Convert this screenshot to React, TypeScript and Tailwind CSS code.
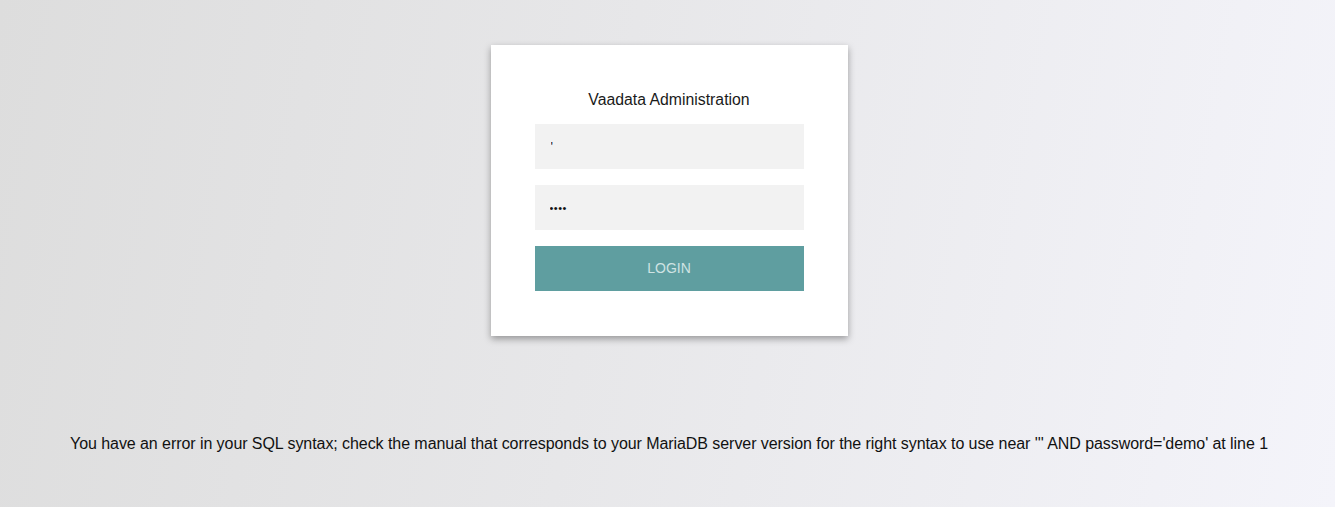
export default function App() {
  return (
    <main
      className="min-h-[507px] w-full flex flex-col items-center pt-[45px] pl-[3px] bg-[linear-gradient(100deg,#dddddd_0%,#e7e7e9_45%,#f4f4fa_100%)]"
      style={{ fontFamily: '"Liberation Sans", Arial, sans-serif' }}
    >
      {/* login card */}
      <div className="w-[357px] bg-white px-[44px] pt-[46px] pb-[45px] shadow-[0_3px_7px_rgba(0,0,0,0.35)]">
        <h1 className="text-center text-[15.8px] leading-[17px] text-[#1a1a1a] mb-[16px]">
          Vaadata Administration
        </h1>
        <div className="flex flex-col gap-[16px]">
          <input
            type="text"
            readOnly
            value="'"
            className="w-full h-[45px] bg-[#f2f2f2] px-[16px] text-[13px] text-[#222] outline-none"
          />
          <input
            type="text"
            readOnly
            value="••••"
            className="w-full h-[45px] bg-[#f2f2f2] px-[15px] text-[11px] tracking-[0.5px] text-[#111] outline-none"
          />
          <button className="w-full h-[45px] bg-[#5f9ea0] text-[14px] text-[#cfe3e3] uppercase">
            Login
          </button>
        </div>
      </div>

      {/* sql error */}
      <p className="mt-[99px] text-center text-[16px] leading-[18px] tracking-[-0.065px] text-[#111]">
        You have an error in your SQL syntax; check the manual that corresponds to your MariaDB server version for the right syntax to use near ''' AND password='demo' at line 1
      </p>
    </main>
  );
}
